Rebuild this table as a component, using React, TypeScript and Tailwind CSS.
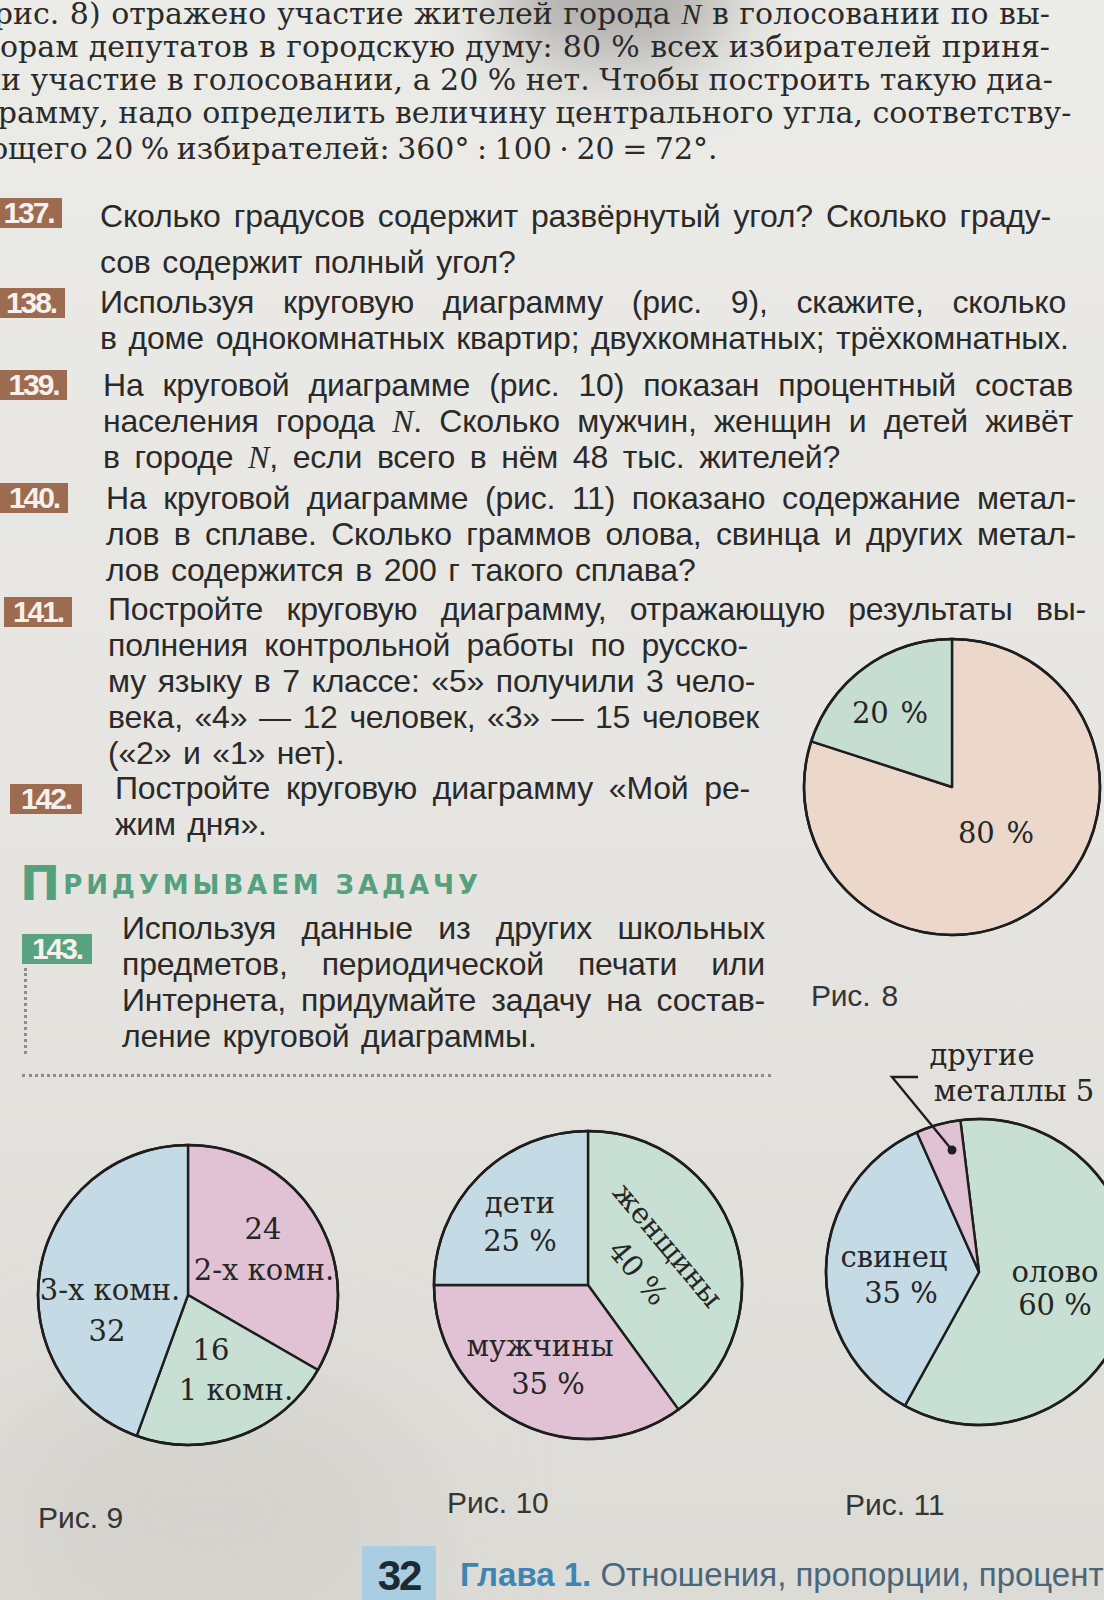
import React from 'react';

const SANS = "font-['Liberation_Sans',Arial,sans-serif]";
const J = 'text-justify [text-align-last:justify] whitespace-nowrap';

const BLUE = '#c4dbe5';
const GREEN = '#c7e0d3';
const PINK = '#e1c2d4';
const PEACH = '#ebd8ca';

const pt = (cx: number, cy: number, r: number, deg: number) => {
  const a = ((deg - 90) * Math.PI) / 180;
  return [cx + r * Math.cos(a), cy + r * Math.sin(a)];
};

const slicePath = (cx: number, cy: number, r: number, from: number, to: number) => {
  const [x0, y0] = pt(cx, cy, r, from);
  const [x1, y1] = pt(cx, cy, r, to);
  const large = to - from > 180 ? 1 : 0;
  return `M${cx} ${cy} L${x0.toFixed(2)} ${y0.toFixed(2)} A${r} ${r} 0 ${large} 1 ${x1.toFixed(2)} ${y1.toFixed(2)} Z`;
};

type Slice = { from: number; to: number; fill: string };

const Pie = ({ cx, cy, r, slices }: { cx: number; cy: number; r: number; slices: Slice[] }) => (
  <g>
    {slices.map((s, i) => (
      <path key={i} d={slicePath(cx, cy, r, s.from, s.to)} fill={s.fill} stroke="#1e1e1e" strokeWidth={2.4} strokeLinejoin="round" />
    ))}
    <circle cx={cx} cy={cy} r={r} fill="none" stroke="#1e1e1e" strokeWidth={2.6} />
  </g>
);

const Label = ({ x, y, rotate, children }: { x: number; y: number; rotate?: number; children: React.ReactNode }) => (
  <text
    x={x}
    y={y}
    textAnchor="middle"
    dominantBaseline="central"
    transform={rotate ? `rotate(${rotate} ${x} ${y})` : undefined}
    className="font-['DejaVu_Serif','Liberation_Serif',serif] text-[29px] fill-[#262626]"
  >
    {children}
  </text>
);

const Badge = ({ num, green, className }: { num: string; green?: boolean; className: string }) => (
  <div
    className={`${className} h-[30px] flex items-center justify-center ${green ? 'bg-[#58a27f]' : 'bg-[#9d6b50]'} text-[#f6f1ec] font-bold text-[30px] leading-none tracking-[-0.07em] ${SANS}`}
  >
    {num}
  </div>
);

type TaskProps = {
  num: string;
  badgeCls: string;
  textCls: string;
  lines: React.ReactNode[];
  lastFull?: boolean;
  className?: string;
};

const Task = ({ num, badgeCls, textCls, lines, lastFull, className = '' }: TaskProps) => (
  <div className={`flex items-start ${className}`}>
    <Badge num={num} className={`shrink-0 ${badgeCls}`} />
    <div className={`shrink-0 ${textCls}`}>
      {lines.map((l, i) => (
        <div key={i} className={i < lines.length - 1 || lastFull ? J : ''}>
          {l}
        </div>
      ))}
    </div>
  </div>
);

const N = () => <i className="font-['Liberation_Serif',serif]">N</i>;

const Fig = ({ label, className }: { label: string; className: string }) => (
  <div className={`${className} ${SANS} text-[30px] leading-[36px] text-[#353535] whitespace-nowrap`}>{label}</div>
);

export default function App() {
  return (
    <div className="relative w-[1104px] h-[1600px] overflow-hidden bg-gradient-to-b from-[#ebebe8] via-[#e6e5e1] to-[#dddbd6] text-[#2a2a2a]">
      {/* phone shadow at the top of the photo */}
      <div className="pointer-events-none absolute left-[500px] -top-[70px] w-[230px] h-[130px] rounded-full bg-[#6e6b68] opacity-50 blur-2xl" />
      <div className="pointer-events-none absolute left-[0px] top-[1380px] w-[420px] h-[260px] rounded-full bg-[#cfcdc8] opacity-60 blur-3xl" />

      <div className="relative flex flex-col">
        {/* top paragraph, cut by the photo edge */}
        <div className="-mt-[3px] -ml-[18px] w-[1068px] font-['DejaVu_Serif','Liberation_Serif',serif] text-[30px] leading-[33px] text-[#2a2a2a]">
          <div className={J}>
            (рис. 8) отражено участие жителей города <N /> в голосовании по вы-
          </div>
          <div className={J}>борам депутатов в городскую думу: 80 % всех избирателей приня-</div>
          <div className={J}>ли участие в голосовании, а 20 % нет. Чтобы построить такую диа-</div>
          <div className={J}>грамму, надо определить величину центрального угла, соответству-</div>
          <div className="mt-[3px] [word-spacing:-2px]">ющего 20 % избирателей: 360° : 100 · 20 = 72°.</div>
        </div>

        <div className={`${SANS} text-[32px] leading-[36px] tracking-[-0.2px] [word-spacing:3px]`}>
          <div className="mt-[33px] flex items-start">
            <Badge num="137." className="-ml-[5px] w-[67px] shrink-0" />
            <div className="ml-[38px] w-[951px] shrink-0">
              <div className={J}>Сколько градусов содержит развёрнутый угол? Сколько граду-</div>
              <div className="mt-[10px]">сов содержит полный угол?</div>
            </div>
          </div>
          <Task
            className="mt-[4px]"
            num="138."
            badgeCls="mt-[4px] -ml-[3px] w-[68px]"
            textCls="ml-[35px] w-[966px]"
            lastFull
            lines={[
              'Используя круговую диаграмму (рис. 9), скажите, сколько',
              'в доме однокомнатных квартир; двухкомнатных; трёхкомнатных.',
            ]}
          />
          <Task
            className="mt-[11px]"
            num="139."
            badgeCls="mt-[3px] w-[67px]"
            textCls="ml-[36px] w-[970px]"
            lines={[
              'На круговой диаграмме (рис. 10) показан процентный состав',
              <>
                населения города <N />. Сколько мужчин, женщин и детей живёт
              </>,
              <span className="[word-spacing:6px]">
                в городе <N />, если всего в нём 48 тыс. жителей?
              </span>,
            ]}
          />
          <Task
            className="mt-[5px]"
            num="140."
            badgeCls="mt-[3px] w-[68px]"
            textCls="ml-[38px] w-[970px]"
            lines={[
              'На круговой диаграмме (рис. 11) показано содержание метал-',
              'лов в сплаве. Сколько граммов олова, свинца и других метал-',
              'лов содержится в 200 г такого сплава?',
            ]}
          />
          <Task
            className="mt-[3px]"
            num="141."
            badgeCls="mt-[6px] ml-[4px] w-[68px]"
            textCls="ml-[36px] w-[978px]"
            lastFull
            lines={['Постройте круговую диаграмму, отражающую результаты вы-']}
          />

          {/* 141 continued, 142, heading and 143 beside Рис. 8 */}
          <div className="flex items-start">
            <div className="w-[780px] shrink-0 flex flex-col">
              <div className="ml-[108px] w-[640px]">
                <div className={J}>полнения контрольной работы по русско-</div>
                <div className={J}>му языку в 7 классе: «5» получили 3 чело-</div>
                <div className={J}>века, «4» — 12 человек, «3» — 15 человек</div>
                <div>(«2» и «1» нет).</div>
              </div>
              <Task
                className="-mt-[1px]"
                num="142."
                badgeCls="mt-[14px] ml-[10px] w-[72px]"
                textCls="ml-[33px] w-[635px]"
                lines={['Постройте круговую диаграмму «Мой ре-', 'жим дня».']}
              />
              <div className="mt-[18px] h-[44px] ml-[20px] flex items-end text-[#55a07d] font-['DejaVu_Sans',sans-serif] font-bold leading-none tracking-normal [word-spacing:0px]">
                <span className="text-[48px] leading-[42px]">П</span>
                <span className="ml-[3px] mb-[6px] text-[26px] uppercase tracking-[0.15em]">ридумываем задачу</span>
              </div>
              <div className="mt-[6px] ml-[22px] w-[749px] flex items-stretch border-b-[3px] border-dotted border-[#8c8c8c] pb-[20px]">
                <div className="w-[70px] shrink-0 flex flex-col">
                  <Badge num="143." green className="mt-[24px] w-[70px]" />
                  <div className="flex-1 mt-[4px] ml-[2px] border-l-[3px] border-dotted border-[#8c8c8c]" />
                </div>
                <div className="ml-[30px] w-[643px] shrink-0">
                  <div className={J}>Используя данные из других школьных</div>
                  <div className={J}>предметов, периодической печати или</div>
                  <div className={J}>Интернета, придумайте задачу на состав-</div>
                  <div>ление круговой диаграммы.</div>
                </div>
              </div>
            </div>

            <div className="flex flex-col">
              <svg className="ml-[22px] mt-[10px]" width={300} height={300} viewBox="0 0 300 300">
                <Pie
                  cx={150}
                  cy={150}
                  r={148}
                  slices={[
                    { from: 0, to: 288, fill: PEACH },
                    { from: 288, to: 360, fill: '#c6ddd1' },
                  ]}
                />
                <Label x={88} y={76}>20 %</Label>
                <Label x={194} y={196}>80 %</Label>
              </svg>
              <Fig label="Рис. 8" className="ml-[31px] mt-[41px]" />
            </div>
          </div>
        </div>

        {/* bottom figures */}
        <div className="flex items-start">
          <div className="ml-[30px] w-[320px] shrink-0 flex flex-col">
            <svg className="mt-[58px]" width={320} height={320} viewBox="0 0 320 320">
              <Pie
                cx={158}
                cy={160}
                r={150}
                slices={[
                  { from: 0, to: 120, fill: PINK },
                  { from: 120, to: 200, fill: GREEN },
                  { from: 200, to: 360, fill: BLUE },
                ]}
              />
              <Label x={233} y={94}>24</Label>
              <Label x={234} y={135}>2-х комн.</Label>
              <Label x={80} y={155}>3-х комн.</Label>
              <Label x={77} y={196}>32</Label>
              <Label x={181} y={215}>16</Label>
              <Label x={206} y={255}>1 комн.</Label>
            </svg>
            <Fig label="Рис. 9" className="ml-[8px] mt-[45px]" />
          </div>

          <div className="ml-[78px] w-[320px] shrink-0 flex flex-col">
            <svg className="mt-[48px]" width={320} height={320} viewBox="0 0 320 320">
              <Pie
                cx={160}
                cy={160}
                r={154}
                slices={[
                  { from: 0, to: 144, fill: GREEN },
                  { from: 144, to: 270, fill: PINK },
                  { from: 270, to: 360, fill: BLUE },
                ]}
              />
              <Label x={92} y={78}>дети</Label>
              <Label x={92} y={116}>25 %</Label>
              <Label x={240} y={120} rotate={50}>женщины</Label>
              <Label x={210} y={148} rotate={50}>40 %</Label>
              <Label x={112} y={221}>мужчины</Label>
              <Label x={120} y={259}>35 %</Label>
            </svg>
            <Fig label="Рис. 10" className="ml-[19px] mt-[40px]" />
          </div>

          <div className="ml-[62px] w-[340px] shrink-0 flex flex-col">
            <svg className="mt-[28px] overflow-visible" width={340} height={320} viewBox="0 0 340 320">
              <Pie
                cx={169}
                cy={167}
                r={153}
                slices={[
                  { from: -7, to: 209, fill: GREEN },
                  { from: 209, to: 336, fill: BLUE },
                  { from: 336, to: 353, fill: PINK },
                ]}
              />
              <polyline points="108,-28 82,-28 142,45" fill="none" stroke="#1e1e1e" strokeWidth={2.4} />
              <circle cx={142} cy={45} r={4.5} fill="#1e1e1e" />
              <Label x={172} y={-50}>другие</Label>
              <Label x={204} y={-14}>металлы 5</Label>
              <Label x={84} y={152}>свинец</Label>
              <Label x={91} y={188}>35 %</Label>
              <Label x={245} y={167}>олово</Label>
              <Label x={245} y={200}>60 %</Label>
            </svg>
            <Fig label="Рис. 11" className="ml-[35px] mt-[62px]" />
          </div>
        </div>

        {/* page footer */}
        <div className={`mt-[10px] ml-[362px] flex items-center whitespace-nowrap ${SANS}`}>
          <div className="w-[74px] h-[58px] shrink-0 flex items-center justify-center bg-[#a9cee1] text-[#1c2a35] font-bold text-[42px] tracking-[-0.05em]">
            32
          </div>
          <div className="ml-[24px] text-[33px] text-[#4a6678]">
            <span className="font-bold text-[#3f85b3]">Глава 1.</span> Отношения, пропорции, проценты
          </div>
        </div>
      </div>
    </div>
  );
}
